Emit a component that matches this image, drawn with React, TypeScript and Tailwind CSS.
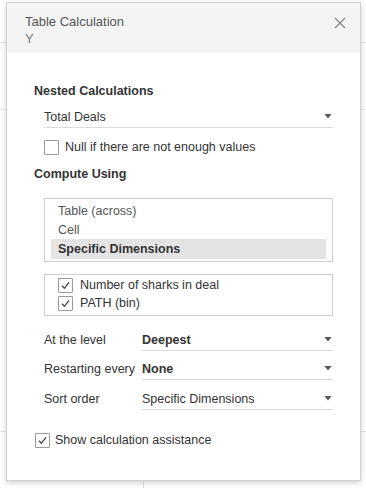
import React from 'react';

const font = { fontFamily: '"Liberation Sans", Arial, sans-serif' };

const Caret: React.FC = () => (
  <svg width="8" height="5" viewBox="0 0 8 5" className="shrink-0">
    <path d="M0.5 0 L7.5 0 L4 4.5 Z" fill="#555" />
  </svg>
);

const CheckBox: React.FC<{ checked?: boolean }> = ({ checked }) => (
  <span className="flex h-[15px] w-[15px] shrink-0 items-center justify-center rounded-[1px] border border-[#9a9a9a] bg-white">
    {checked && (
      <svg width="11" height="11" viewBox="0 0 11 11">
        <path d="M2 5.8 L4.4 8.3 L9 2.4" fill="none" stroke="#444" strokeWidth="1.3" />
      </svg>
    )}
  </span>
);

const Select: React.FC<{ value: string; bold?: boolean; className?: string }> = ({ value, bold, className }) => (
  <div className={`flex h-[22px] items-center justify-between border-b border-[#dcdcdc] pr-[1px] ${className ?? ''}`}>
    <span className={`text-[12.5px] text-[#333] ${bold ? 'font-bold' : ''}`}>{value}</span>
    <Caret />
  </div>
);

const LevelRow: React.FC<{ label: string; value: string; bold?: boolean; className?: string }> = ({ label, value, bold, className }) => (
  <div className={`flex items-center ${className ?? ''}`}>
    <span className="w-[98px] shrink-0 text-[12.5px] text-[#333]">{label}</span>
    <Select value={value} bold={bold} className="flex-1" />
  </div>
);

export default function App() {
  return (
    <div className="relative h-[488px] w-[366px] overflow-hidden bg-white leading-[16px]" style={font}>
      {/* faint sheet lines behind the dialog */}
      <div className="flex flex-col">
        <div className="h-[43px] border-b border-[#e4e4e4]" />
        <div className="h-[67px] border-b border-[#ececec]" />
        <div className="h-[322px] border-b border-[#e4e4e4]" />
        <div className="ml-[143px] h-[60px] w-px bg-[#e4e4e4]" />
      </div>

      <div className="absolute left-[6px] top-[2px] flex h-[479px] w-[355px] flex-col border border-[#d2d2d2] bg-white shadow-[0_2px_6px_rgba(0,0,0,0.18)]">
        <div className="flex h-[50px] items-start justify-between bg-[#f4f4f4] pl-[18px] pr-[14px] pt-[10px]">
          <div className="flex flex-col">
            <span className="text-[13px] leading-[17px] text-[#555]">Table Calculation</span>
            <span className="text-[13px] leading-[17px] text-[#777]">Y</span>
          </div>
          <svg width="12" height="12" viewBox="0 0 12 12" className="mt-[4px]">
            <path d="M1 1 L11 11 M11 1 L1 11" stroke="#888" strokeWidth="1.3" />
          </svg>
        </div>

        <div className="flex flex-col pl-[27px] pr-[27px] pt-[30px]">
          <div className="text-[12.5px] font-bold text-[#333]">Nested Calculations</div>
          <Select value="Total Deals" className="ml-[10px] mt-[7px]" />
          <label className="ml-[10px] mt-[11px] flex items-center gap-[6px]">
            <CheckBox />
            <span className="text-[12.5px] text-[#333]">Null if there are not enough values</span>
          </label>

          <div className="mt-[11px] text-[12.5px] font-bold text-[#333]">Compute Using</div>
          <div className="ml-[10px] mt-[16px] flex h-[64px] flex-col border border-[#cfcfcf] px-[6px] pt-[2px]">
            <div className="flex h-[19px] items-center pl-[7px] text-[12.5px] text-[#555]">Table (across)</div>
            <div className="flex h-[19px] items-center pl-[7px] text-[12.5px] text-[#555]">Cell</div>
            <div className="flex h-[20px] items-center bg-[#e4e4e4] pl-[7px] text-[12.5px] font-bold text-[#333]">Specific Dimensions</div>
          </div>

          <div className="ml-[10px] mt-[12px] flex h-[42px] flex-col border border-[#cfcfcf] pl-[13px] pt-[1px]">
            <label className="flex h-[18px] items-center gap-[7px]">
              <CheckBox checked />
              <span className="text-[12.5px] text-[#333]">Number of sharks in deal</span>
            </label>
            <label className="flex h-[18px] items-center gap-[7px]">
              <CheckBox checked />
              <span className="text-[12.5px] text-[#333]">PATH (bin)</span>
            </label>
          </div>

          <LevelRow label="At the level" value="Deepest" bold className="ml-[10px] mt-[13px]" />
          <LevelRow label="Restarting every" value="None" bold className="ml-[10px] mt-[7px]" />
          <LevelRow label="Sort order" value="Specific Dimensions" className="ml-[10px] mt-[8px]" />

          <label className="ml-[1px] mt-[22px] flex items-center gap-[5px]">
            <CheckBox checked />
            <span className="text-[12.5px] text-[#333]">Show calculation assistance</span>
          </label>
        </div>
      </div>
    </div>
  );
}
